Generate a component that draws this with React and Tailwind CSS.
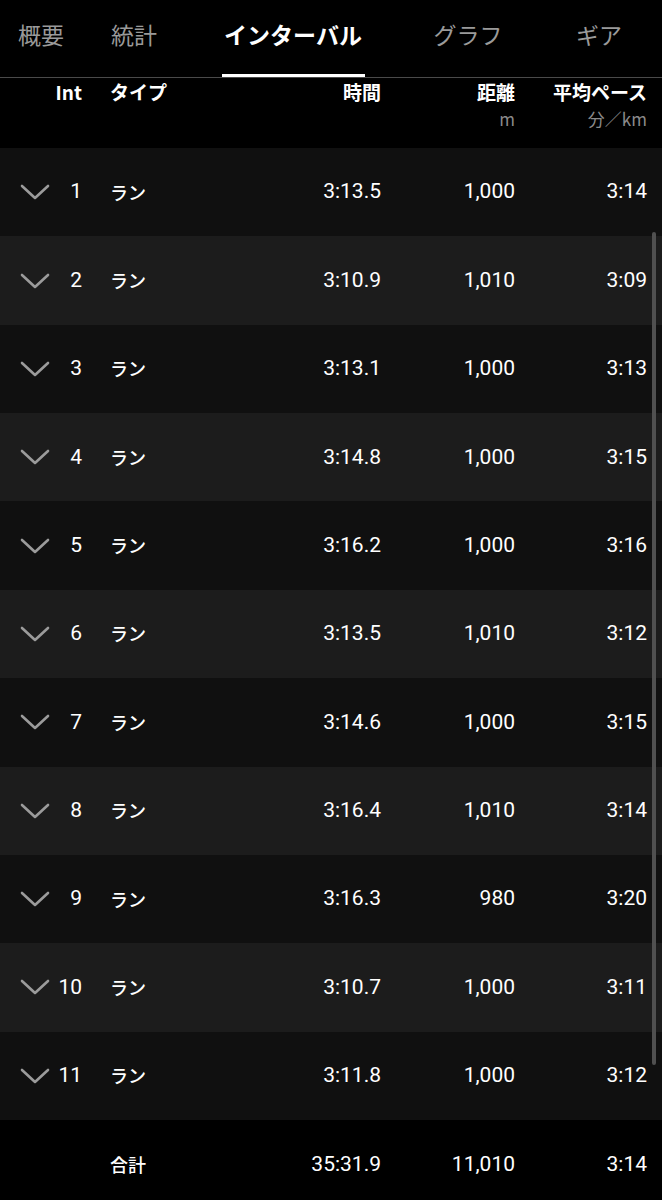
import React from 'react'

const tabs = [
  { label: '概要', w: 'w-[82px]' },
  { label: '統計', w: 'w-[104px]' },
  { label: 'インターバル', w: 'w-[214px]', active: true },
  { label: 'グラフ', w: 'w-[136px]' },
  { label: 'ギア', w: 'w-[126px]' },
]

const laps = [
  ['1', '3:13.5', '1,000', '3:14'],
  ['2', '3:10.9', '1,010', '3:09'],
  ['3', '3:13.1', '1,000', '3:13'],
  ['4', '3:14.8', '1,000', '3:15'],
  ['5', '3:16.2', '1,000', '3:16'],
  ['6', '3:13.5', '1,010', '3:12'],
  ['7', '3:14.6', '1,000', '3:15'],
  ['8', '3:16.4', '1,010', '3:14'],
  ['9', '3:16.3', '980', '3:20'],
  ['10', '3:10.7', '1,000', '3:11'],
  ['11', '3:11.8', '1,000', '3:12'],
]

function Chevron() {
  return (
    <svg width="30" height="16" viewBox="0 0 30 16" className="shrink-0">
      <path d="M2 2 L15 14 L28 2" fill="none" stroke="#9b9b9b" strokeWidth="2.6" strokeLinecap="round" strokeLinejoin="round" />
    </svg>
  )
}

export default function App() {
  return (
    <div className="relative w-[662px] h-[1200px] bg-black text-white overflow-hidden font-['Roboto','Noto_Sans_CJK_JP',sans-serif]">
      {/* tabs */}
      <div className="flex h-[78px] border-b border-[#4a4a4a]">
        {tabs.map(t => (
          <div key={t.label} className={`${t.w} flex flex-col items-center`}>
            <div className={`h-[75px] flex items-center justify-center text-[23px] pb-[6px] ${t.active ? 'text-white font-bold' : 'text-[#9a9a9a]'}`}>
              <span className="font-['Noto_Sans_CJK_JP',sans-serif]">{t.label}</span>
            </div>
            {t.active && <div className="h-[3px] w-[143px] bg-white" />}
          </div>
        ))}
      </div>

      {/* column header */}
      <div className="flex h-[70px] text-[19px] leading-[28px] font-bold font-['Noto_Sans_CJK_JP',sans-serif]">
        <div className="w-[82px] text-right">Int</div>
        <div className="w-[28px]" />
        <div className="w-[150px]">タイプ</div>
        <div className="w-[121px] text-right">時間</div>
        <div className="w-[134px] text-right flex flex-col items-end">
          <span>距離</span>
          <span className="text-[17px] leading-[25px] font-normal text-[#8a8a8a]">m</span>
        </div>
        <div className="w-[132px] text-right flex flex-col items-end">
          <span>平均ペース</span>
          <span className="text-[17px] leading-[25px] font-normal text-[#8a8a8a]">分／km</span>
        </div>
      </div>

      {/* laps */}
      <div className="flex flex-col">
        {laps.map(([n, time, dist, pace], i) => (
          <div key={n} className={`flex items-center h-[88.36px] text-[21px] ${i % 2 === 0 ? 'bg-[#101010]' : 'bg-[#1c1c1c]'}`}>
            <div className="w-[20px]" />
            <Chevron />
            <div className="w-[32px] text-right">{n}</div>
            <div className="w-[28px]" />
            <div className="w-[150px] text-[18px] font-medium font-['Noto_Sans_CJK_JP',sans-serif]">ラン</div>
            <div className="w-[121px] text-right">{time}</div>
            <div className="w-[134px] text-right">{dist}</div>
            <div className="w-[132px] text-right">{pace}</div>
          </div>
        ))}
      </div>

      {/* total */}
      <div className="flex items-center h-[80px] pt-[10px] text-[21px] bg-black">
        <div className="w-[110px]" />
        <div className="w-[150px] text-[18px] font-medium font-['Noto_Sans_CJK_JP',sans-serif]">合計</div>
        <div className="w-[121px] text-right">35:31.9</div>
        <div className="w-[134px] text-right">11,010</div>
        <div className="w-[132px] text-right">3:14</div>
      </div>

      {/* scrollbar overlay */}
      <div className="absolute left-[652px] top-[232px] w-[4px] h-[833px] rounded-full bg-[#505050]" />
    </div>
  )
}
